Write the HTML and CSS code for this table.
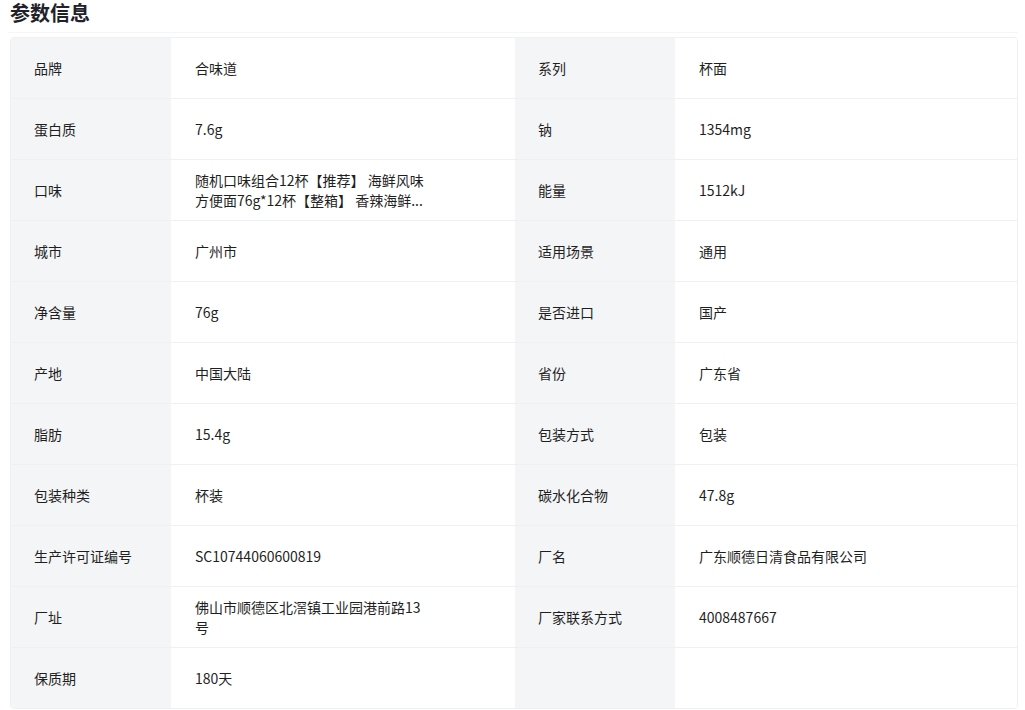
FILE: index.html
```html
<!DOCTYPE html>
<html lang="zh-CN">
<head>
<meta charset="utf-8">
<title>参数信息</title>
<link rel="stylesheet" href="styles.css">
</head>
<body>
<div class="page">
  <div class="header"><h2 class="title">参数信息</h2></div>
  <div class="params">
    <div class="cell label">品牌</div><div class="cell value">合味道</div>
    <div class="cell label">系列</div><div class="cell value">杯面</div>

    <div class="cell label">蛋白质</div><div class="cell value">7.6g</div>
    <div class="cell label">钠</div><div class="cell value">1354mg</div>

    <div class="cell label">口味</div><div class="cell value"><span class="multi">随机口味组合12杯【推荐】 海鲜风味<br>方便面76g*12杯【整箱】 香辣海鲜...</span></div>
    <div class="cell label">能量</div><div class="cell value">1512kJ</div>

    <div class="cell label">城市</div><div class="cell value">广州市</div>
    <div class="cell label">适用场景</div><div class="cell value">通用</div>

    <div class="cell label">净含量</div><div class="cell value">76g</div>
    <div class="cell label">是否进口</div><div class="cell value">国产</div>

    <div class="cell label">产地</div><div class="cell value">中国大陆</div>
    <div class="cell label">省份</div><div class="cell value">广东省</div>

    <div class="cell label">脂肪</div><div class="cell value">15.4g</div>
    <div class="cell label">包装方式</div><div class="cell value">包装</div>

    <div class="cell label">包装种类</div><div class="cell value">杯装</div>
    <div class="cell label">碳水化合物</div><div class="cell value">47.8g</div>

    <div class="cell label">生产许可证编号</div><div class="cell value">SC10744060600819</div>
    <div class="cell label">厂名</div><div class="cell value">广东顺德日清食品有限公司</div>

    <div class="cell label">厂址</div><div class="cell value"><span class="multi">佛山市顺德区北滘镇工业园港前路13<br>号</span></div>
    <div class="cell label">厂家联系方式</div><div class="cell value">4008487667</div>

    <div class="cell label last">保质期</div><div class="cell value last">180天</div>
    <div class="cell label last"></div><div class="cell value last"></div>
  </div>
</div>
</body>
</html>
```

FILE: styles.css
```css
* { box-sizing: border-box; }
html, body { margin: 0; padding: 0; background: #ffffff; }
body {
  font-family: "Microsoft YaHei", "Noto Sans CJK SC", "Noto Sans", sans-serif;
  color: #1f1f1f;
}
.page {
  padding: 0 7px 0 10px;
}
.header {
  height: 33px;
  border-bottom: 1px solid #f6f6f7;
  margin-left: -2px;
  padding-left: 2px;
}
.title {
  margin: 0;
  font-size: 20px;
  line-height: 26px;
  font-weight: 700;
  color: #1f2329;
}
.params {
  margin-top: 4px;
  display: grid;
  grid-template-columns: 160px 344px 160px 1fr;
  border: 1px solid #eef0f2;
  border-radius: 4px;
  overflow: hidden;
}
.cell {
  height: 61px;
  border-bottom: 1px solid #eef0f2;
  display: flex;
  align-items: center;
  font-size: 14px;
  line-height: 20px;
}
.cell.last { border-bottom: none; height: 60px; }
.label {
  background: #f4f5f6;
  padding-left: 23px;
}
.value {
  background: #ffffff;
  padding-left: 24px;
  padding-right: 24px;
}
.multi {
  display: block;
  white-space: nowrap;
}
```
